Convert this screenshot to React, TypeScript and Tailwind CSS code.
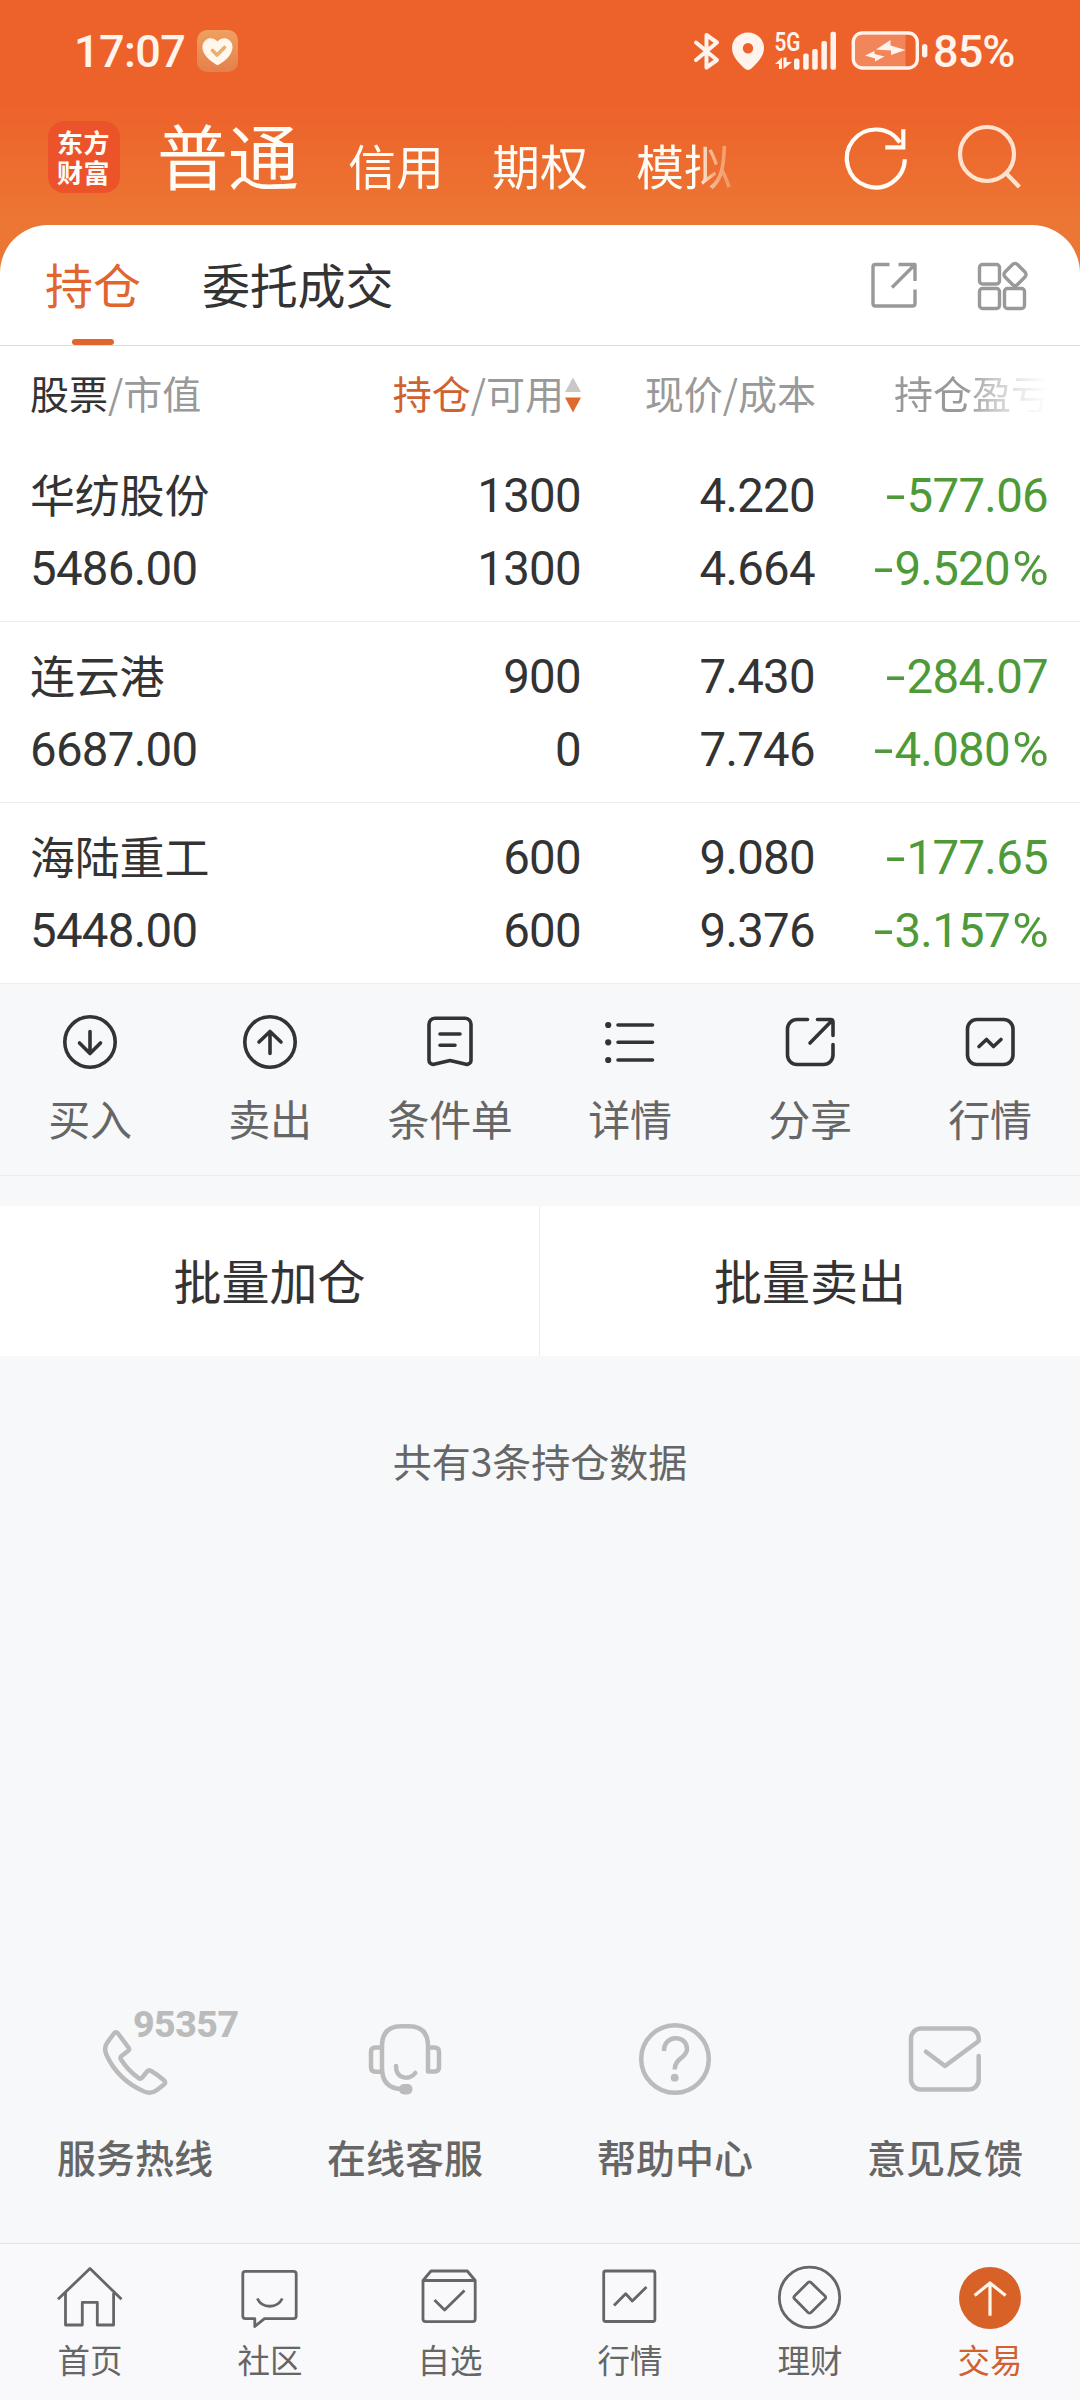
import type { ReactNode } from "react";

const CJK = "font-['Noto_Sans_CJK_SC',sans-serif]";
const NUM = "font-[Roboto,'Noto_Sans_CJK_SC',sans-serif]";

function StatusIcons() {
  return (
    <svg width="240" height="48" viewBox="0 0 240 48" fill="none" stroke="#FFF3EC" strokeWidth="4" strokeLinecap="round" strokeLinejoin="round">
      <path d="M6 15.500 27 33 16.500 40.500V8L27 15.500 6 33" />
      <path d="M58 5.500c-9 0-16 7-16 15.500 0 8 6 14 12 20q4 4 8 0c6-6 12-12 12-20C74 12.500 67 5.500 58 5.500zm0 10.500a5.200 5.200 0 1 1 0 10.400 5.200 5.200 0 0 1 0-10.400z" fill="#FFF3EC" fillRule="evenodd" stroke="none" />
      <text x="84.500" y="24" fill="#FFF3EC" stroke="none" fontFamily="Roboto" fontWeight="600" fontSize="26" textLength="26" lengthAdjust="spacingAndGlyphs">5G</text>
      <path d="M85 37l7-6.500V42h-3v-5zM93.500 30.500h3V35h5.500l-8.500 7z" fill="#FFF3EC" stroke="none" />
      <g fill="#FFF3EC" stroke="none">
        <rect x="104" y="31.500" width="5.500" height="11.200" rx="2" />
        <rect x="113.200" y="26.500" width="5.500" height="16.200" rx="2" />
        <rect x="122.200" y="22" width="5.500" height="20.700" rx="2" />
        <rect x="131.400" y="14" width="5.500" height="28.700" rx="2" />
        <rect x="140.500" y="4.700" width="5.500" height="38" rx="2" />
      </g>
      <path d="M172 8h43.500v32H172a7 7 0 0 1-7-7V15a7 7 0 0 1 7-7z" fill="#F2855A" stroke="none" />
      <rect x="163.300" y="6" width="64" height="35" rx="9" strokeWidth="3.400" />
      <rect x="232" y="17" width="5.400" height="13.500" rx="2.700" fill="#FFF3EC" stroke="none" />
      <path d="M186 22.500 200.500 13v5.500L215.500 23 201 28v-4.500zM175 28.500l9.500-4.500v3l10 2.500L185 34.500v-3z" fill="#FFF3EC" stroke="none" />
    </svg>
  );
}

function StatusBar() {
  return (
    <div className="flex h-[102px] items-center pl-[74px] text-[#FFF3EC]">
      <div className={`${NUM} w-[123px] text-[45px] leading-none font-medium tracking-[-0.600px]`}>17:07</div>
      <svg width="41" height="42" viewBox="0 0 41 42" fill="none">
        <defs>
          <linearGradient id="badge" x1="0" y1="0" x2="0" y2="1">
            <stop offset="0" stopColor="#EFA060" />
            <stop offset="1" stopColor="#E67F4C" />
          </linearGradient>
        </defs>
        <rect width="41" height="42" rx="10" fill="url(#badge)" />
        <path d="M20.500 11.500C17 7.500 12.500 7.500 9.500 9.500 4.500 13 4.500 19 7.500 24c3 5 8 8 11.500 10.500q1.500 1 3 0C26 32 30.500 29 33.500 24c3-5 3-11-2-14.500-3-2-7.500-2-11 2z" fill="#FFF6EC" />
        <path d="M15.500 20.500l4.500 4.500 7.500-7.500" stroke="#E8B070" strokeWidth="3.600" strokeLinecap="round" strokeLinejoin="round" />
      </svg>
      <div className="ml-[452px] flex items-center">
        <StatusIcons />
        <div className={`${NUM} ml-[3px] text-[45px] leading-none font-medium tracking-[-0.900px]`}>85%</div>
      </div>
    </div>
  );
}

function TopNav() {
  return (
    <div className={`${CJK} flex h-[123px] items-start pl-12 text-[#FFFBF5]`}>
      <div className="mt-[19px] flex h-[72px] w-[72px] items-center justify-center rounded-[16px] bg-[#EC532A]">
        <p className="w-[54px] text-[26px] leading-[30px] font-bold tracking-[0.600px] break-all">东方财富</p>
      </div>
      <div className="-mt-[2px] ml-[37px] text-[71px] leading-[106px]">普通</div>
      <div className="mt-[34px] ml-[49px] flex w-[390px] gap-12 bg-[linear-gradient(90deg,#FFFBF5_0_348px,#F6B488_365px,#F0935E_384px)] bg-clip-text text-[48px] leading-[56px] text-transparent">
        <span>信用</span>
        <span>期权</span>
        <span>模拟</span>
      </div>
      <svg className="mt-[18px] ml-[102px]" width="190" height="76" viewBox="840 120 190 76" fill="none" strokeWidth="4.200">
        <path d="M904.800 159.300A29 29 0 1 1 900 142.500" stroke="#FFFBF5" />
        <path d="M903.300 129.300V147.300H885.300" stroke="#FFFBF5" />
        <circle cx="987" cy="154" r="27" stroke="#FFE3D0" />
        <path d="M1005.600 172.700 1019.400 187" stroke="#FFE3D0" />
      </svg>
    </div>
  );
}

function SectionTabs() {
  return (
    <div className={`${CJK} flex h-[120px] items-center pr-[50px] pl-[45px] text-[48px] text-[#333]`}>
      <div className="relative flex h-full items-center text-[#E0652F]">
        <span className="-mt-1">持仓</span>
        <span className="absolute bottom-0 left-[27px] h-[6px] w-[42px] rounded-full bg-[#E0652F]" />
      </div>
      <span className="-mt-1 ml-[61px] tracking-[-0.200px]">委托成交</span>
      <svg className="ml-auto" width="165" height="56" viewBox="865 257 165 56" fill="none" stroke="#999" strokeWidth="3.400" strokeLinejoin="round">
        <path d="M889.500 264.500H875.500Q873 264.500 873 267V303.500Q873 306 875.500 306H912.500Q915 306 915 303.500V289.500" />
        <path d="M898.500 264.500H915V281M914.500 265 892 287.500" />
        <rect x="979.500" y="264.500" width="20" height="19.500" rx="3" />
        <rect x="979.500" y="288.500" width="20" height="20" rx="3" />
        <rect x="1004.500" y="288.500" width="20" height="20" rx="3" />
        <rect x="1006.200" y="265.700" width="17.600" height="17.600" rx="3.500" transform="rotate(45 1015 274.500)" />
      </svg>
    </div>
  );
}

const COLS = "grid grid-cols-[318px_234px_234px_234px] px-[30px]";

function TableHead() {
  return (
    <div className={`${CJK} ${COLS} h-[96px] items-center border-t border-[#DDD] text-[39px] leading-none text-[#999]`}>
      <div className="-mt-[3px]"><span className="text-[#333]">股票</span>/市值</div>
      <div className="-mt-[3px] flex items-center justify-end">
        <span className="whitespace-nowrap"><span className="text-[#CF6230]">持仓</span>/可用</span>
        <svg className="mt-[6px]" width="18" height="38" viewBox="0 0 18 38">
          <path d="M9 1.500 17 16H1z" fill="#C8C8C8" />
          <path d="M1 21.500h16L9 36.500z" fill="#E0692F" />
        </svg>
      </div>
      <div className="-mt-[3px] text-right">现价/成本</div>
      <div className="-mt-[3px] bg-[linear-gradient(90deg,#999_150px,#ccc_180px,#eee_210px,#fff_234px)] bg-clip-text text-right text-transparent">持仓盈亏</div>
    </div>
  );
}

type Holding = { name: string; value: string; held: string; free: string; price: string; cost: string; pl: string; pct: string };

const HOLDINGS: Holding[] = [
  { name: "华纺股份", value: "5486.00", held: "1300", free: "1300", price: "4.220", cost: "4.664", pl: "577.06", pct: "9.520" },
  { name: "连云港", value: "6687.00", held: "900", free: "0", price: "7.430", cost: "7.746", pl: "284.07", pct: "4.080" },
  { name: "海陆重工", value: "5448.00", held: "600", free: "600", price: "9.080", cost: "9.376", pl: "177.65", pct: "3.157" },
];

function Loss({ value, percent }: { value: string; percent?: boolean }) {
  return (
    <div className="pr-[2px] text-right whitespace-nowrap text-[#4E9A39]">
      <span className="mr-[2px] inline-block origin-right scale-x-150">-</span>
      {value}
      {percent && <span className="ml-[4px] inline-block origin-right scale-x-105">%</span>}
    </div>
  );
}

function HoldingRow({ h }: { h: Holding }) {
  return (
    <div className={`${NUM} ${COLS} h-[181px] content-start border-b border-[#EDEDED] pt-[19px] text-[47.400px] leading-[73px] tracking-[-0.700px] text-[#333]`}>
      <div className={`${CJK} -mt-[3px] mb-[3px] text-[45px] tracking-[-0.200px]`}>{h.name}</div>
      <div className="pr-px text-right">{h.held}</div>
      <div className="pr-px text-right">{h.price}</div>
      <Loss value={h.pl} />
      <div>{h.value}</div>
      <div className="pr-px text-right">{h.free}</div>
      <div className="pr-px text-right">{h.cost}</div>
      <Loss value={h.pct} percent />
    </div>
  );
}

const ACTIONS: { label: string; icon: ReactNode }[] = [
  { label: "买入", icon: <><circle cx="36" cy="36" r="25.200" /><path d="M36 25.500V47.500M25.500 37 36 47.500 46.500 37" /></> },
  { label: "卖出", icon: <><circle cx="36" cy="36" r="25.200" /><path d="M36 47.500V25.500M25 36 36 25.500 47 36" /></> },
  { label: "条件单", icon: <><path d="M21 12.200h30a6 6 0 0 1 6 6v36a4 4 0 0 1-5 4L36 54.500 20 58.200a4 4 0 0 1-5-4v-36a6 6 0 0 1 6-6z" /><path d="M26 28h20M26 39.200h15" /></> },
  { label: "详情", icon: <><g fill="#333" stroke="none"><circle cx="14.200" cy="19" r="3.100" /><circle cx="14.200" cy="36.300" r="3.100" /><circle cx="14.200" cy="54" r="3.100" /></g><path d="M24 19h34.500M24 36.300h34.500M24 54h34.500" /></> },
  { label: "分享", icon: <><path d="M33.500 13.500H23a9.500 9.500 0 0 0-9.500 9.500V49a9.500 9.500 0 0 0 9.500 9.500H49.500a9.500 9.500 0 0 0 9.500-9.500V38.500" /><path d="M43.500 13.500H56.500Q59 13.500 59 16V29.500M58 14.500 36 37" /></> },
  { label: "行情", icon: <><rect x="13.500" y="13.500" width="45.500" height="45" rx="9.500" /><path d="M25 40.500 32.500 33.500 39.500 40.500 47 33.500" /></> },
];

function ActionBar() {
  return (
    <div className={`${CJK} grid h-[192px] grid-cols-6 border-b border-[#EBECEE] text-[42px] leading-none text-[#666]`}>
      {ACTIONS.map((a) => (
        <div key={a.label} className="flex flex-col items-center pt-[22px]">
          <svg width="72" height="72" viewBox="0 0 72 72" fill="none" stroke="#333" strokeWidth="3.600" strokeLinecap="round" strokeLinejoin="round">{a.icon}</svg>
          <span className="mt-[19px] tracking-[-0.300px]">{a.label}</span>
        </div>
      ))}
    </div>
  );
}

const SERVICES: { label: string; tag?: string; icon: ReactNode }[] = [
  { label: "服务热线", tag: "95357", icon: <path d="M28 19.500 38.500 33.500Q39.800 35.300 38.300 36.700L31.500 42Q29.800 43.500 31 45.500 38 56.500 48.500 64 50.500 65.300 52 63.700L57.300 57.300Q58.800 55.700 60.800 56.800 68 61 74 66.300 76.300 68.500 74.300 70.300L67 76Q61 80.500 54 77.500 28 66 16.500 41 13.500 34 17 29L23.500 20Q25.700 16.800 28 19.500z" /> },
  { label: "在线客服", icon: <><path d="M22 57.700H15.500Q11 57.700 11 53.200V38Q11 33.500 15.500 33.500H22" /><path d="M41 75Q22 74 22 54V32Q22 12.300 41.500 12.300H48.500Q68 12.300 68 32V57.500H74.500Q79 57.500 79 53V38Q79 33.500 74.500 33.500H69" /><path d="M36 52C36 66 50 66 55.300 59" /><rect x="39" y="70" width="13.500" height="10.500" rx="5" fill="#BBB" stroke="none" /></> },
  { label: "帮助中心", icon: <><circle cx="45" cy="45" r="33.800" /><path d="M34 37C34 20 57 20.500 57 35 57 44 44.700 44 44.700 55.500" strokeLinecap="butt" /><circle cx="44.700" cy="63.700" r="3.900" fill="#BBB" stroke="none" /></> },
  { label: "意见反馈", icon: <path d="M78.700 42V65.500a10 10 0 0 1-10 10H21a10 10 0 0 1-10-10V24.500a10 10 0 0 1 10-10H68.700a10 10 0 0 1 10 10V27L45 52 26 37.700" /> },
];

function Services() {
  return (
    <div className={`${CJK} grid h-[229px] grid-cols-4 text-[39px] leading-none font-medium text-[#666]`}>
      {SERVICES.map((s) => (
        <div key={s.label} className="flex flex-col items-center">
          <div className="relative">
            <svg width="90" height="90" viewBox="0 0 90 90" fill="none" stroke="#BBB" strokeWidth="4.500" strokeLinecap="round" strokeLinejoin="round">{s.icon}</svg>
            {s.tag && <span className="absolute top-[-8px] left-[43px] font-[Roboto,sans-serif] text-[37.500px] leading-none font-extrabold tracking-[-0.500px] text-[#BBB]">{s.tag}</span>}
          </div>
          <span className="mt-[33px]">{s.label}</span>
        </div>
      ))}
    </div>
  );
}

const TABS: { label: string; active?: boolean; icon: ReactNode }[] = [
  { label: "首页", icon: <><path d="M4 38.300 36 7.500 67.500 38.300" /><path d="M11.500 32V64H28.300V41.300H43.300V64H59.600V32" /></> },
  { label: "社区", icon: <><path d="M11.500 10.400H59.500Q62.200 10.400 62.200 13V55Q62.200 57.600 59.500 57.600H30.500L20.800 65.500V57.600H11.500Q8.800 57.600 8.800 55V13Q8.800 10.400 11.500 10.400z" /><path d="M23.300 37.500C28 47.800 43.300 47.800 48.300 37.500" /></> },
  { label: "自选", icon: <><path d="M9 19.500 17 10H53.300L61.200 19.500V58Q61.200 60.700 58.500 60.700H11.700Q9 60.700 9 58zM9 19.500H61.200" /><path d="M20.500 39 30.600 49 50.500 29.500" /></> },
  { label: "行情", icon: <><rect x="9.700" y="10" width="51.200" height="50.500" rx="2" /><path d="M20 44.500 31.700 32.700 38.300 40 52.500 26" /></> },
  { label: "理财", icon: <><circle cx="35.500" cy="36.400" r="30.200" /><path d="M37 21.500 51 35Q52.300 36.400 51 37.800L37 51.500Q35.500 52.800 34 51.500L20.500 37.800Q19.200 36.400 20.500 35L34 21.500Q35.500 20.200 37 21.500z" /></> },
  { label: "交易", active: true, icon: <><circle cx="36" cy="37" r="31" fill="#D86127" stroke="none" /><path d="M36 22V54.700M20.600 34.500 36 22 51.600 34.500" stroke="#FFF6EC" strokeWidth="3.200" /></> },
];

function BottomNav() {
  return (
    <div className={`${CJK} grid h-[157px] grid-cols-6 border-t border-[#E2E3E5] bg-[#F9F9FB] text-[32.500px] leading-[33px] text-[#666]`}>
      {TABS.map((t) => (
        <div key={t.label} className={t.active ? "flex flex-col items-center pt-[17px] text-[#CF6230]" : "flex flex-col items-center pt-[17px]"}>
          <svg width="72" height="72" viewBox="0 0 72 72" fill="none" stroke="#666" strokeWidth="2.800" strokeLinejoin="round">{t.icon}</svg>
          <span className="mt-[9px]">{t.label}</span>
        </div>
      ))}
    </div>
  );
}

export default function App() {
  return (
    <div className="flex h-[2400px] w-[1080px] flex-col overflow-hidden bg-[#F7F8FA]">
      <div className="bg-[linear-gradient(180deg,#ED622B_0_105px,#EC7633_220px)]">
        <StatusBar />
        <TopNav />
        <div className="rounded-t-[48px] bg-white">
          <SectionTabs />
          <TableHead />
        </div>
      </div>
      <div className="bg-white">
        {HOLDINGS.map((h) => <HoldingRow key={h.name} h={h} />)}
      </div>
      <ActionBar />
      <div className={`${CJK} mt-[30px] grid h-[150px] grid-cols-2 bg-white text-[48px] text-[#333]`}>
        <div className="flex items-center justify-center border-r border-[#EDEDED] pb-[4px]">批量加仓</div>
        <div className="flex items-center justify-center pb-[4px]">批量卖出</div>
      </div>
      <div className={`${CJK} mt-[85px] text-center text-[39px] leading-[39px] text-[#666]`}>共有3条持仓数据</div>
      <div className="flex-1" />
      <Services />
      <BottomNav />
    </div>
  );
}
